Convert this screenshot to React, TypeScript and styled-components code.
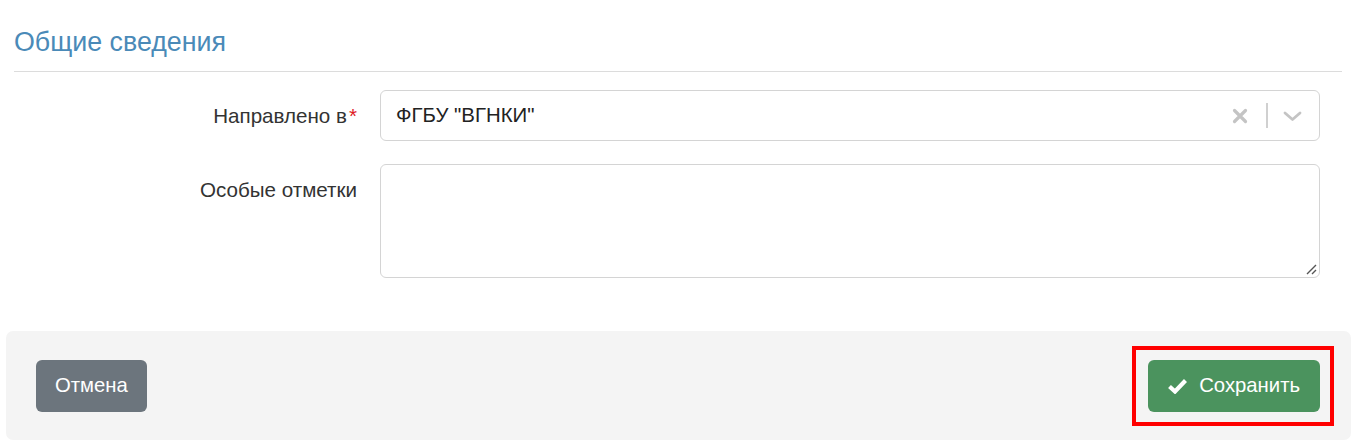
import React from "react";
import styled, { createGlobalStyle } from "styled-components";

const Global = createGlobalStyle`
  html, body { margin: 0; padding: 0; background: #fff; }
  body { font-family: "Liberation Sans", Arial, sans-serif; color: #212529; }
  * { box-sizing: border-box; }
`;

const Page = styled.div`
  width: 1359px;
  height: 445px;
  padding: 0 8px 0 6px;
  display: flex;
  flex-direction: column;
  overflow: hidden;
`;

const Section = styled.section`
  padding: 0 9px 0 8px;
`;

const Title = styled.h2`
  margin: 0;
  padding-top: 27px;
  font-size: 26.8px;
  font-weight: 400;
  line-height: 31px;
  color: #4a8ab8;
  padding-bottom: 13px;
  border-bottom: 1px solid #dcdcdc;
`;

const Form = styled.div`
  display: flex;
  flex-direction: column;
  gap: 23px;
  padding: 18px 22px 0 0;
`;

const Row = styled.div<{ $top?: boolean }>`
  display: grid;
  grid-template-columns: 343px 1fr;
  column-gap: 23px;
  align-items: ${(p) => (p.$top ? "start" : "center")};
`;

const Label = styled.label<{ $top?: boolean }>`
  text-align: right;
  font-size: 20.6px;
  color: #333;
  padding-top: ${(p) => (p.$top ? "14px" : "0")};
`;

const Req = styled.span`
  color: #e0191f;
  margin-left: 2px;
`;

const SelectBox = styled.div`
  height: 51px;
  border: 1px solid #d4d4d4;
  border-radius: 6px;
  display: flex;
  align-items: center;
  padding: 0 17px 0 15px;
  font-size: 20.4px;
  color: #222;
`;

const SelectValue = styled.span`
  flex: 1;
`;

const Indicators = styled.div`
  display: flex;
  align-items: center;
  color: #c4c4c4;
`;

const Sep = styled.span`
  width: 2px;
  height: 25px;
  margin: 0 15px 0 18px;
  background: #d0d0d0;
`;

const TextArea = styled.div`
  position: relative;
  height: 114px;
  border: 1px solid #d4d4d4;
  border-radius: 6px;
`;

const Grip = styled.svg`
  position: absolute;
  right: 2px;
  bottom: 2px;
`;

const Footer = styled.div`
  margin-top: 53px;
  height: 109px;
  background: #f4f4f4;
  border-radius: 7px;
  display: flex;
  justify-content: space-between;
  align-items: center;
  padding: 0 31px 0 30px;
`;

const Button = styled.button<{ $variant: "secondary" | "success" }>`
  height: 52px;
  border: none;
  border-radius: 6px;
  font-family: "Liberation Sans", Arial, sans-serif;
  font-size: 20.3px;
  color: #fff;
  display: inline-flex;
  align-items: center;
  gap: 12px;
  padding: ${(p) => (p.$variant === "success" ? "0 20px" : "0 19px")};
  background: ${(p) => (p.$variant === "success" ? "#4b935e" : "#6c757d")};
`;

const Highlight = styled.div`
  position: relative;
`;

const RedFrame = styled.div`
  position: absolute;
  left: -16px;
  top: -14px;
  right: -14px;
  bottom: -14px;
  border: 4px solid #ff0000;
  pointer-events: none;
`;

export default function App() {
  return (
    <>
      <Global />
      <Page>
        <Section>
          <Title>Общие сведения</Title>
          <Form>
            <Row>
              <Label>
                Направлено в<Req>*</Req>
              </Label>
              <SelectBox>
                <SelectValue>ФГБУ "ВГНКИ"</SelectValue>
                <Indicators>
                  <svg width="16" height="16" viewBox="0 0 16 16">
                    <path
                      d="M2.5 2.5 L13.5 13.5 M13.5 2.5 L2.5 13.5"
                      stroke="currentColor"
                      strokeWidth="3.2"
                      strokeLinecap="round"
                    />
                  </svg>
                  <Sep />
                  <svg width="19" height="12" viewBox="0 0 19 12">
                    <path
                      d="M2 3 L9.5 9.5 L17 3"
                      fill="none"
                      stroke="currentColor"
                      strokeWidth="2.8"
                      strokeLinecap="round"
                      strokeLinejoin="round"
                    />
                  </svg>
                </Indicators>
              </SelectBox>
            </Row>
            <Row $top>
              <Label $top>Особые отметки</Label>
              <TextArea>
                <Grip width="11" height="11" viewBox="0 0 11 11">
                  <path d="M1 10 L10 1 M6 10 L10 6" stroke="#555" strokeWidth="1.4" />
                </Grip>
              </TextArea>
            </Row>
          </Form>
        </Section>
        <Footer>
          <Button $variant="secondary">Отмена</Button>
          <Highlight>
            <Button $variant="success">
              <svg width="19" height="16" viewBox="0 0 19 16">
                <path
                  d="M1.5 8.5 L7 13.5 L17.5 2.5"
                  fill="none"
                  stroke="#fff"
                  strokeWidth="4.2"
                  strokeLinejoin="miter"
                />
              </svg>
              Сохранить
            </Button>
            <RedFrame />
          </Highlight>
        </Footer>
      </Page>
    </>
  );
}
